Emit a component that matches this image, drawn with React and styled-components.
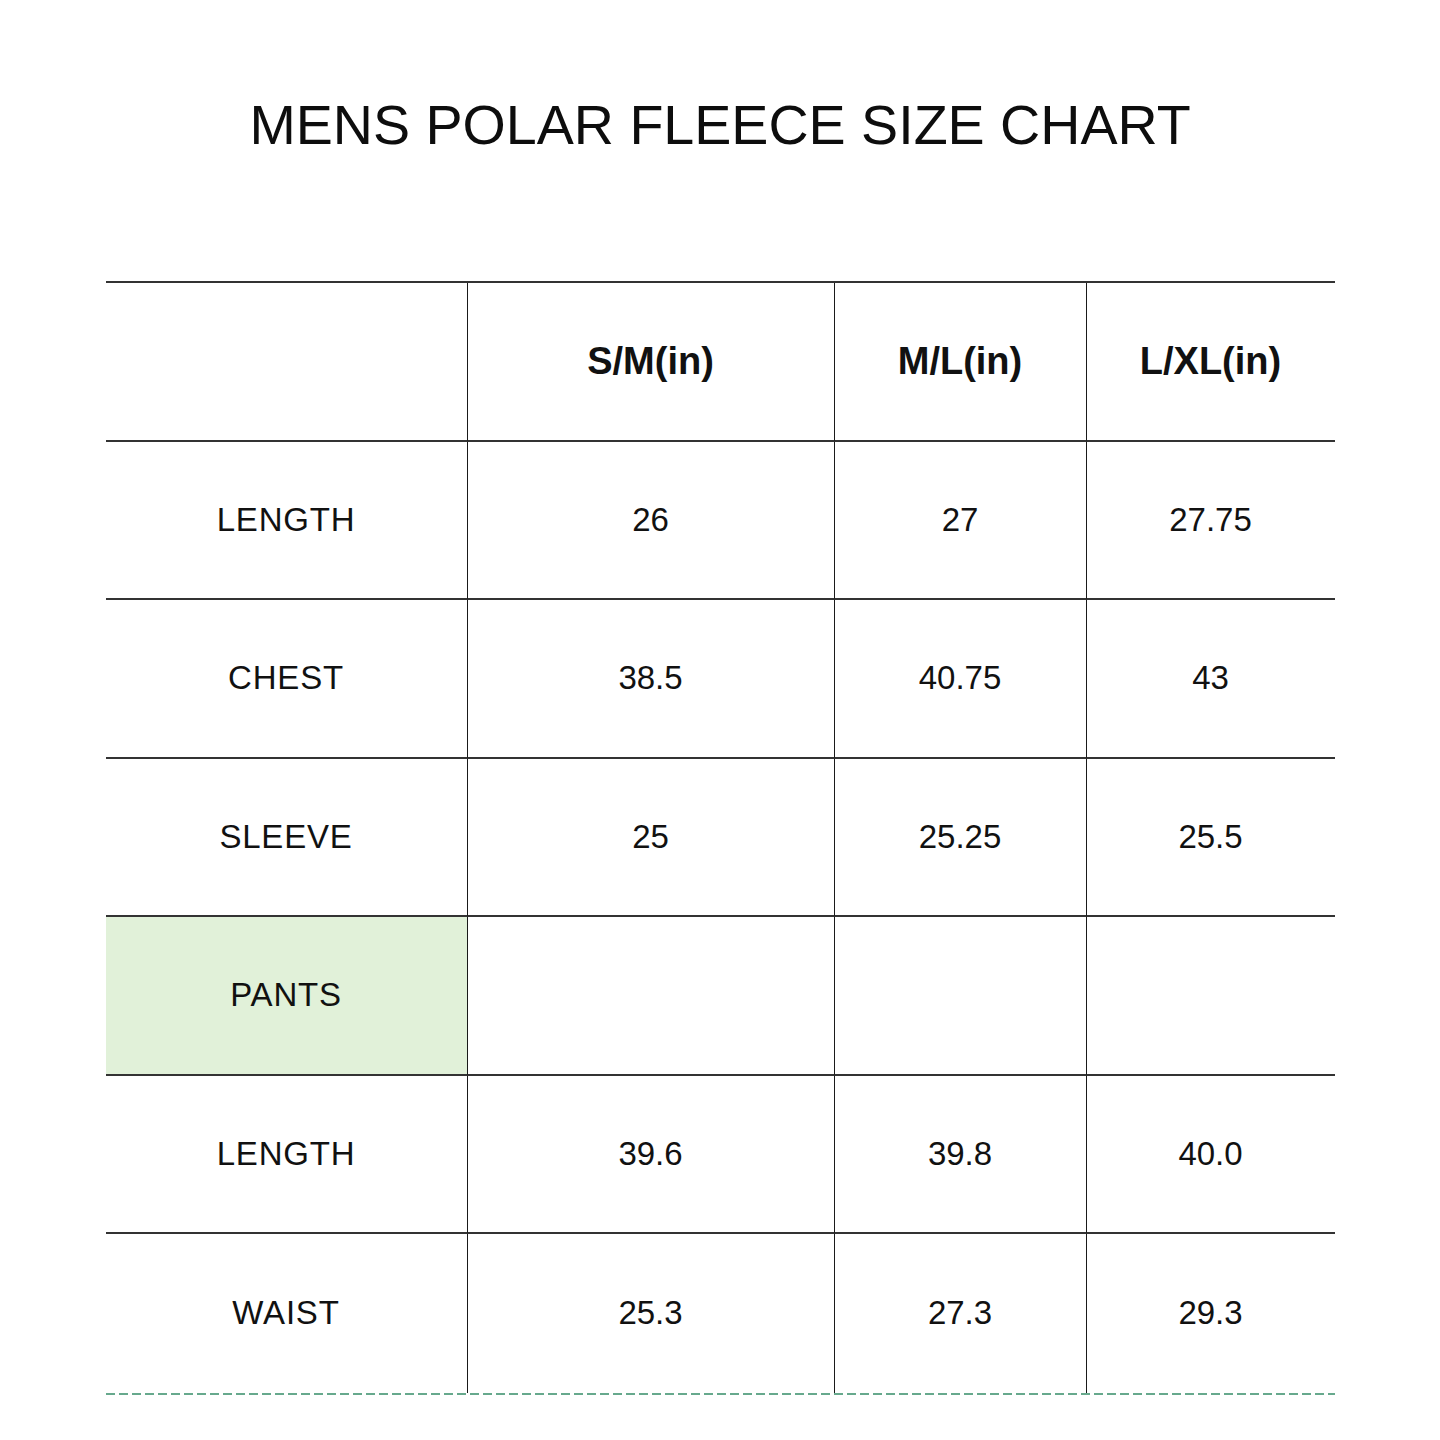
import React from "react";
import styled, { createGlobalStyle } from "styled-components";

const GlobalStyle = createGlobalStyle`
  body {
    margin: 0;
    background: #ffffff;
    font-family: "Liberation Sans", Arial, sans-serif;
    color: #111;
  }
`;

const sizes = ["S/M(in)", "M/L(in)", "L/XL(in)"];

const rows = [
  { label: "LENGTH", values: ["26", "27", "27.75"] },
  { label: "CHEST", values: ["38.5", "40.75", "43"] },
  { label: "SLEEVE", values: ["25", "25.25", "25.5"] },
  { label: "PANTS", values: ["", "", ""], highlight: true },
  { label: "LENGTH", values: ["39.6", "39.8", "40.0"] },
  { label: "WAIST", values: ["25.3", "27.3", "29.3"] },
];

function App() {
  return (
    <Page>
      <GlobalStyle />
      <Title>MENS POLAR FLEECE SIZE CHART</Title>
      <Chart>
        <Cell />
        {sizes.map((s) => (
          <Cell key={s} $divider $bold>
            {s}
          </Cell>
        ))}
        {rows.map((row, r) => (
          <React.Fragment key={r}>
            <Cell $label $green={row.highlight} $last={r === rows.length - 1}>
              {row.label}
            </Cell>
            {row.values.map((v, i) => (
              <Cell key={i} $divider $last={r === rows.length - 1}>
                {v}
              </Cell>
            ))}
          </React.Fragment>
        ))}
        <DashedRule />
      </Chart>
    </Page>
  );
}

export default App;

const Page = styled.div`
  width: 1440px;
  height: 1440px;
  padding-top: 93px;
  box-sizing: border-box;
  display: flex;
  flex-direction: column;
  align-items: center;
`;

const Title = styled.h1`
  margin: 0;
  font-size: 55.6px;
  line-height: 64px;
  font-weight: 400;
  color: #0d0d0d;
`;

const Chart = styled.div`
  margin-top: 124px;
  width: 1229px;
  display: grid;
  grid-template-columns: 361px 367px 252px 249px;
  border-top: 2px solid #333;
`;

const Cell = styled.div`
  height: 158.5px;
  box-sizing: border-box;
  display: flex;
  align-items: center;
  justify-content: center;
  font-size: ${(p) => (p.$bold ? "38px" : "33px")};
  font-weight: ${(p) => (p.$bold ? 700 : 400)};
  letter-spacing: ${(p) => (p.$label ? "0.8px" : "0")};
  color: #111;
  background: ${(p) => (p.$green ? "#e1f1d9" : "transparent")};
  border-left: ${(p) => (p.$divider ? "1.5px solid #1a1a1a" : "none")};
  border-bottom: ${(p) => (p.$last ? "none" : "2px solid #333")};
`;

const DashedRule = styled.div`
  grid-column: 1 / -1;
  height: 2px;
  background: repeating-linear-gradient(
    to right,
    #67a98d 0 9px,
    transparent 9px 13px
  );
`;
